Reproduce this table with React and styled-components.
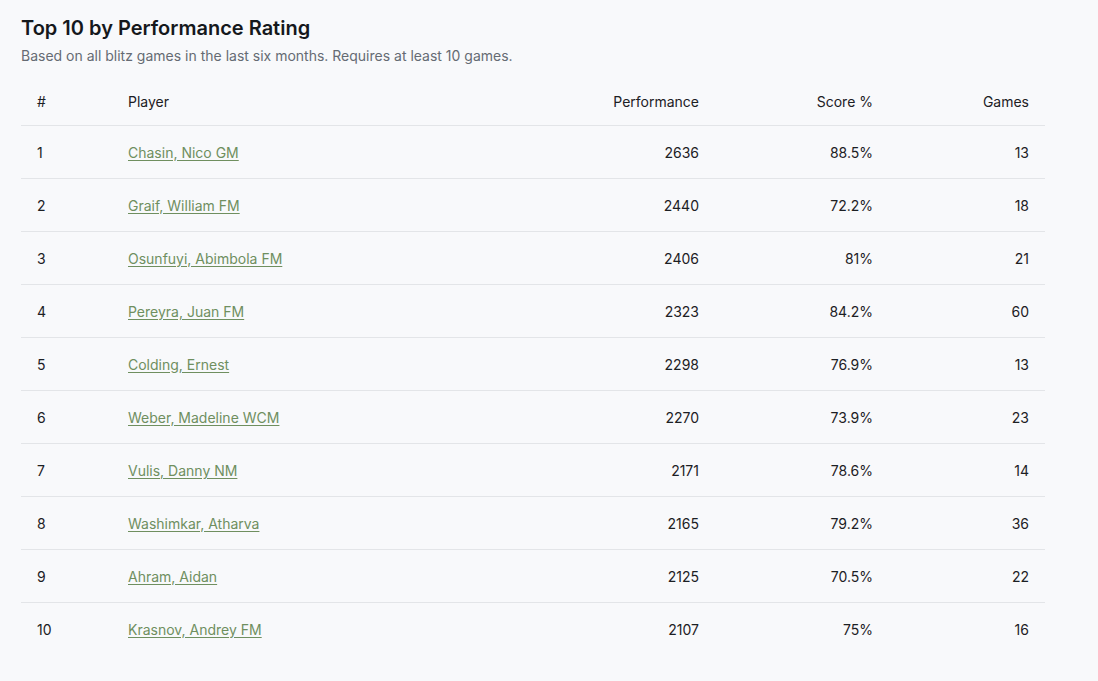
import styled, { createGlobalStyle } from "styled-components";

const GlobalStyle = createGlobalStyle`
  html, body {
    margin: 0;
    background: #f8f9fb;
    font-family: Inter, "Noto Sans", sans-serif;
    color: #1c2024;
  }
`;

const players = [
  { rank: 1, name: "Chasin, Nico GM", perf: 2636, score: "88.5%", games: 13 },
  { rank: 2, name: "Graif, William FM", perf: 2440, score: "72.2%", games: 18 },
  { rank: 3, name: "Osunfuyi, Abimbola FM", perf: 2406, score: "81%", games: 21 },
  { rank: 4, name: "Pereyra, Juan FM", perf: 2323, score: "84.2%", games: 60 },
  { rank: 5, name: "Colding, Ernest", perf: 2298, score: "76.9%", games: 13 },
  { rank: 6, name: "Weber, Madeline WCM", perf: 2270, score: "73.9%", games: 23 },
  { rank: 7, name: "Vulis, Danny NM", perf: 2171, score: "78.6%", games: 14 },
  { rank: 8, name: "Washimkar, Atharva", perf: 2165, score: "79.2%", games: 36 },
  { rank: 9, name: "Ahram, Aidan", perf: 2125, score: "70.5%", games: 22 },
  { rank: 10, name: "Krasnov, Andrey FM", perf: 2107, score: "75%", games: 16 },
];

//Leaderboard of the best performance ratings
const App = () => {
  return (
    <>
      <GlobalStyle />
      <Page>
        <Title>Top 10 by Performance Rating</Title>
        <Subtitle>
          Based on all blitz games in the last six months. Requires at least 10
          games.
        </Subtitle>
        <Table>
          <colgroup>
            <col style={{ width: 91 }} />
            <col />
            <col style={{ width: 184 }} />
            <col style={{ width: 174 }} />
            <col style={{ width: 156 }} />
          </colgroup>
          <thead>
            <tr>
              <Th>#</Th>
              <Th>Player</Th>
              <Th $right>Performance</Th>
              <Th $right>Score %</Th>
              <Th $right>Games</Th>
            </tr>
          </thead>
          <tbody>
            {players.map((p) => (
              <Row key={p.rank}>
                <Td>{p.rank}</Td>
                <Td>
                  <PlayerLink href="#">{p.name}</PlayerLink>
                </Td>
                <Td $right>{p.perf}</Td>
                <Td $right>{p.score}</Td>
                <Td $right>{p.games}</Td>
              </Row>
            ))}
          </tbody>
        </Table>
      </Page>
    </>
  );
};

export default App;

const Page = styled.div`
  padding: 14px 53px 20px 21px;
`;

const Title = styled.h1`
  margin: 0;
  font-size: 20px;
  line-height: 28px;
  font-weight: 600;
  color: #15181c;
`;

const Subtitle = styled.p`
  margin: 4px 0 0;
  font-size: 14px;
  line-height: 20px;
  color: #656b73;
`;

const Table = styled.table`
  width: 1024px;
  margin-top: 11px;
  border-collapse: collapse;
  table-layout: fixed;
  font-size: 14px;
`;

const Th = styled.th`
  height: 48px;
  padding: 0 16px;
  font-weight: 400;
  color: #1c2024;
  text-align: ${(props) => (props.$right ? "right" : "left")};
  border-bottom: 1px solid #e3e5e8;
`;

const Row = styled.tr`
  border-bottom: 1px solid #e3e5e8;

  &:last-child {
    border-bottom: none;
  }
`;

const Td = styled.td`
  height: 52px;
  padding: 0 16px;
  color: #1c2024;
  text-align: ${(props) => (props.$right ? "right" : "left")};
`;

const PlayerLink = styled.a`
  color: #6f8f5f;
  text-decoration: underline;
  text-underline-offset: 2px;
`;
